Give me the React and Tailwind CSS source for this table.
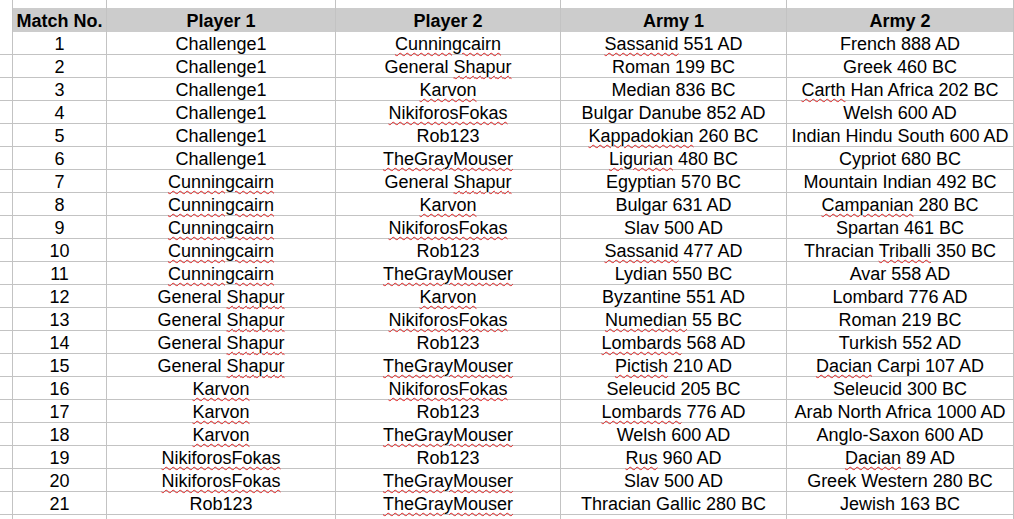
const rows = [
  [1, "Challenge1", "*Cunningcairn", "*Sassanid| 551 AD", "French 888 AD"],
  [2, "Challenge1", "General |*Shapur", "Roman 199 BC", "Greek 460 BC"],
  [3, "Challenge1", "*Karvon", "Median 836 BC", "*Carth| Han Africa 202 BC"],
  [4, "Challenge1", "*NikiforosFokas", "Bulgar Danube 852 AD", "Welsh 600 AD"],
  [5, "Challenge1", "Rob123", "*Kappadokian| 260 BC", "Indian Hindu South 600 AD"],
  [6, "Challenge1", "*TheGrayMouser", "*Ligurian| 480 BC", "Cypriot 680 BC"],
  [7, "*Cunningcairn", "General |*Shapur", "Egyptian 570 BC", "Mountain Indian 492 BC"],
  [8, "*Cunningcairn", "*Karvon", "Bulgar 631 AD", "*Campanian| 280 BC"],
  [9, "*Cunningcairn", "*NikiforosFokas", "Slav 500 AD", "Spartan 461 BC"],
  [10, "*Cunningcairn", "Rob123", "*Sassanid| 477 AD", "Thracian |*Triballi| 350 BC"],
  [11, "*Cunningcairn", "*TheGrayMouser", "Lydian 550 BC", "Avar 558 AD"],
  [12, "General |*Shapur", "*Karvon", "Byzantine 551 AD", "Lombard 776 AD"],
  [13, "General |*Shapur", "*NikiforosFokas", "*Numedian| 55 BC", "Roman 219 BC"],
  [14, "General |*Shapur", "Rob123", "*Lombards| 568 AD", "Turkish 552 AD"],
  [15, "General |*Shapur", "*TheGrayMouser", "*Pictish| 210 AD", "*Dacian| Carpi 107 AD"],
  [16, "*Karvon", "*NikiforosFokas", "Seleucid 205 BC", "Seleucid 300 BC"],
  [17, "*Karvon", "Rob123", "*Lombards| 776 AD", "Arab North Africa 1000 AD"],
  [18, "*Karvon", "*TheGrayMouser", "Welsh 600 AD", "Anglo-Saxon 600 AD"],
  [19, "*NikiforosFokas", "Rob123", "*Rus| 960 AD", "*Dacian| 89 AD"],
  [20, "*NikiforosFokas", "*TheGrayMouser", "Slav 500 AD", "Greek Western 280 BC"],
  [21, "Rob123", "*TheGrayMouser", "Thracian Gallic 280 BC", "Jewish 163 BC"],
];

function Txt({ value }) {
  const s = String(value);
  const parts = s.split("|");
  return (
    <span className="whitespace-pre">
      {parts.map((p, i) =>
        p.startsWith("*") ? (
          <span
            key={i}
            className="underline decoration-wavy decoration-[#e02020] decoration-[1px] underline-offset-[2px]"
          >
            {p.slice(1)}
          </span>
        ) : (
          <span key={i}>{p}</span>
        )
      )}
    </span>
  );
}

const widths = ["w-[13px]", "w-[94px]", "w-[229px]", "w-[225px]", "w-[226px]", "w-[227px]"];
const line = "border-[#c3c3c3]";

export default function App() {
  return (
    <div
      className="w-[1014px] h-[519px] overflow-hidden bg-white text-black"
      style={{ fontFamily: '"Liberation Sans", Arial, sans-serif' }}
    >
      {/* top partial row */}
      <div className="flex h-[8px]">
        {widths.map((w, i) => (
          <div key={i} className={`${w} h-full border-r ${line}`} />
        ))}
      </div>
      {/* header */}
      <div className="flex h-[24px] text-[18px] font-bold">
        <div className={`w-[13px] h-full border-r ${line}`} />
        {["Match No.", "Player 1", "Player 2", "Army 1", "Army 2"].map((h, i) => (
          <div
            key={i}
            className={`${widths[i + 1]} h-full bg-[#cccccc] border-r ${line} flex items-center justify-center pt-[2px] leading-none`}
          >
            {h}
          </div>
        ))}
      </div>
      {rows.map((r, ri) => (
        <div key={ri} className="flex h-[23px] text-[18px]">
          <div className={`w-[13px] h-full border-r border-b ${line}`} />
          {r.map((c, ci) => (
            <div
              key={ci}
              className={`${widths[ci + 1]} h-full border-r border-b ${line} flex items-center justify-center pt-[1px] leading-none`}
            >
              <Txt value={c} />
            </div>
          ))}
        </div>
      ))}
      <div className="flex h-[8px]">
        {widths.map((w, i) => (
          <div key={i} className={`${w} h-full border-r ${line}`} />
        ))}
      </div>
    </div>
  );
}
